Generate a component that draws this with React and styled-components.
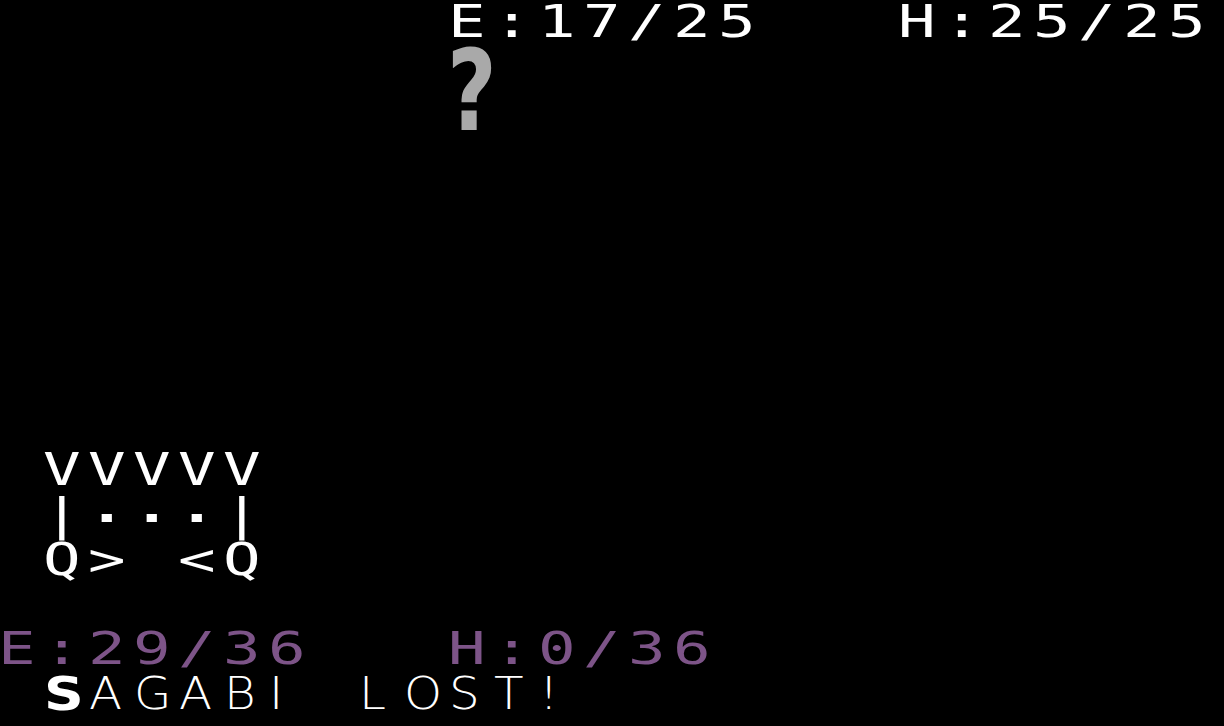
import styled, { createGlobalStyle } from "styled-components";

// terminal screen: every line is a row of fixed cells, 45px wide
const ROW_H = 44.8;
const CELL_W = 45;

const GlobalStyle = createGlobalStyle`
  html, body {
    margin: 0;
    padding: 0;
    background: #000;
    overflow: hidden;
  }
`;

const Screen = styled.div`
  display: flex;
  flex-direction: column;
  width: 1224px;
  height: 726px;
  background: #000;
  font-family: "DejaVu Sans Mono", "Liberation Mono", monospace;
`;

const Row = styled.div`
  display: flex;
  height: ${ROW_H}px;
  color: ${(p) => p.$color || "#fff"};
`;

const Cell = styled.span`
  flex: 0 0 ${CELL_W}px;
  width: ${CELL_W}px;
  height: ${ROW_H}px;
  display: flex;
  justify-content: flex-start;
  overflow: visible;
`;

const Glyph = styled.span`
  display: inline-block;
  font-size: 44px;
  line-height: ${ROW_H}px;
  margin-left: -2px;
  white-space: pre;
  transform-origin: left center;
  transform: scaleX(1.42) translateY(${(p) => p.$lift || 0}px);
  font-weight: ${(p) => (p.$bold ? 700 : 400)};
`;

const ThinGlyph = styled(Glyph)`
  font-family: "DejaVu Sans", "Liberation Sans", sans-serif;
  font-weight: ${(p) => (p.$bold ? 700 : 200)};
  font-size: ${(p) => (p.$bold ? 46 : 44)}px;
  margin-left: -1px;
  transform: scaleX(${(p) => (p.$bold ? 1.2 : 1.1)});
`;

const Mystery = styled.span`
  display: inline-block;
  font-family: "Liberation Sans Narrow", "DejaVu Sans Condensed", "Liberation Sans", sans-serif;
  font-weight: 700;
  font-size: 112px;
  line-height: 92px;
  margin-left: -3px;
  color: #a9a9a9;
  transform-origin: left center;
  transform: scaleX(0.85);
`;

const lines = [
  { text: "          E:17/25   H:25/25" },
  { text: "          ?", big: true },
  { text: "" },
  { text: "" },
  { text: "" },
  { text: "" },
  { text: "" },
  { text: "" },
  { text: "" },
  { text: "" },
  { text: " VVVVV" },
  { text: " |...|" },
  { text: " Q> <Q" },
  { text: "" },
  { text: "E:29/36   H:0/36", color: "#7d5488" },
  { text: " SAGABI LOST!", thin: true, boldFirst: 1 },
];

const renderChar = (line, ch, i) => {
  if (ch === " ") return <Cell key={i} />;
  if (line.big && ch === "?") {
    return (
      <Cell key={i}>
        <Mystery>?</Mystery>
      </Cell>
    );
  }
  if (line.thin) {
    return (
      <Cell key={i}>
        <ThinGlyph $bold={i === line.boldFirst}>{ch}</ThinGlyph>
      </Cell>
    );
  }
  return (
    <Cell key={i}>
      <Glyph $lift={ch === "." ? -8 : 0} $bold={ch === "."}>
        {ch}
      </Glyph>
    </Cell>
  );
};

const App = () => {
  return (
    <>
      <GlobalStyle />
      <Screen>
        {lines.map((line, r) => (
          <Row key={r} $color={line.color}>
            {line.text.split("").map((ch, i) => renderChar(line, ch, i))}
          </Row>
        ))}
      </Screen>
    </>
  );
};

export default App;
